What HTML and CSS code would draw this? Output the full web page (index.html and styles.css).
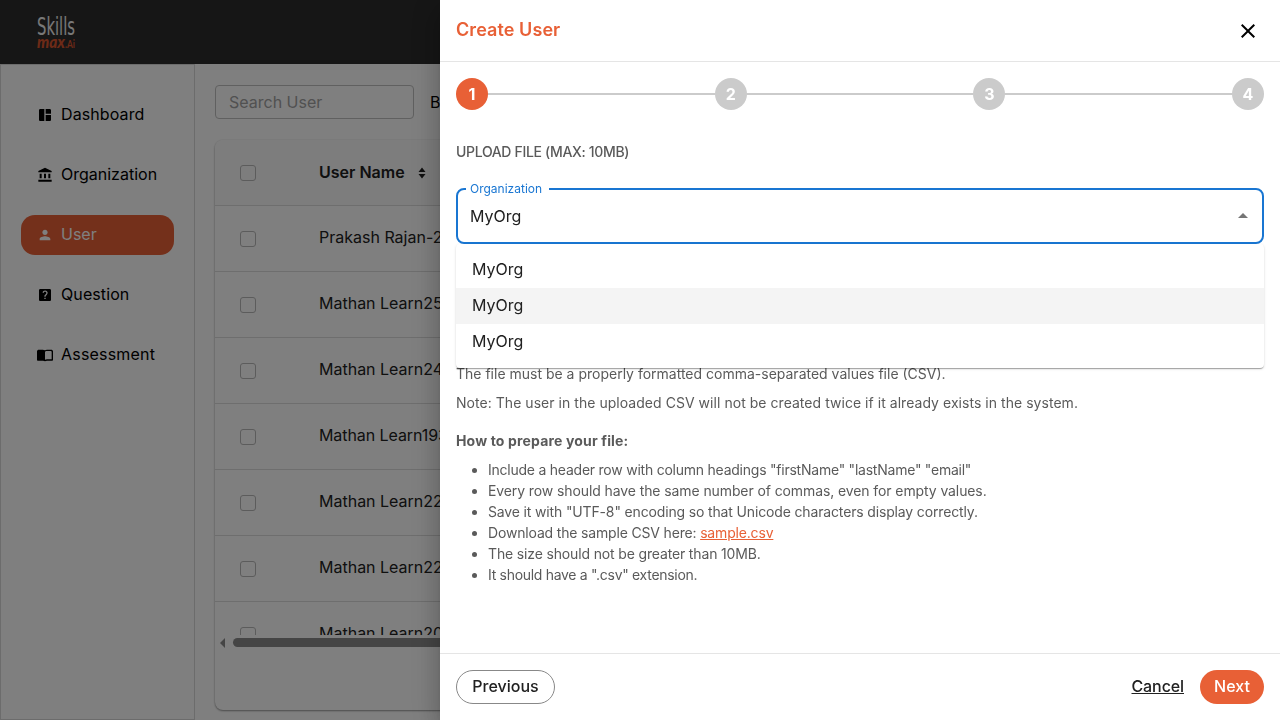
FILE: index.html
```html
<!DOCTYPE html>
<html lang="en">
<head>
<meta charset="utf-8">
<title>Create User</title>
<link rel="stylesheet" href="styles.css">
</head>
<body>
<div class="app">
  <header class="topbar">
    <svg class="logo" width="44" height="40" viewBox="0 0 44 40">
      <text class="logo-skills" x="1" y="22" textLength="38" lengthAdjust="spacingAndGlyphs">Skills</text>
      <text class="logo-max" x="1" y="35" textLength="28" lengthAdjust="spacingAndGlyphs">max</text>
      <text class="logo-ai" x="29" y="34.500" textLength="10" lengthAdjust="spacingAndGlyphs">.Ai</text>
    </svg>
  </header>
  <div class="body">
    <nav class="sidebar">
      <a class="nav-item"><svg viewBox="0 0 24 24"><path d="M11 21H5c-1.100 0-2-.9-2-2V5c0-1.100.9-2 2-2h6v18zm2 0h6c1.100 0 2-.9 2-2v-7h-8v9zm8-11V5c0-1.100-.9-2-2-2h-6v7h8z"/></svg><span class="t-dash">Dashboard</span></a>
      <a class="nav-item"><svg viewBox="0 0 24 24"><path d="M4 10h3v7H4zm6.500 0h3v7h-3zM2 19h20v3H2zm15-9h3v7h-3zM12 1 2 6v2h20V6z"/></svg><span class="t-org">Organization</span></a>
      <a class="nav-item active"><svg viewBox="0 0 24 24"><path d="M12 12c2.210 0 4-1.790 4-4s-1.790-4-4-4-4 1.790-4 4 1.790 4 4 4zm0 2c-2.670 0-8 1.340-8 4v2h16v-2c0-2.660-5.330-4-8-4z"/></svg><span class="t-user">User</span></a>
      <a class="nav-item"><svg viewBox="0 0 24 24"><path fill-rule="evenodd" d="M19 3H5c-1.100 0-2 .9-2 2v14c0 1.100.9 2 2 2h14c1.100 0 2-.9 2-2V5c0-1.100-.9-2-2-2zm-6 15h-2v-2h2zm1.800-6.400c-.9 1.100-1.800 1.400-1.800 3.100h-2c0-2.500 1-2.900 1.900-3.800.7-.7 1.100-1.100 1.100-1.900 0-1.200-.9-1.900-1.900-1.900S10.200 7.900 10 9l-1.800-.8C8.700 6.400 10.200 5.200 12.100 5.200c2.300 0 3.900 1.500 3.900 3.600 0 1.200-.5 2-1.200 2.800z"/></svg><span class="t-quest">Question</span></a>
      <a class="nav-item"><svg viewBox="0 0 24 24"><path fill-rule="evenodd" d="M21 4H15c-1.300 0-2.300.4-3 1-.9-.6-2-1-3.300-1H3C1.300 4 0 5 0 6.500V19c0 1 .7 1.500 1.500 1.500H9c1.200 0 2.200.4 3 1 .8-.6 1.800-1 3-1h7.500c.8 0 1.500-.5 1.500-1.500V6.500C24 5 22.700 4 21 4zm1 14.500h-7c-1.200 0-2.200.3-3 .8V8c0-1.200 1.200-2 3-2h5.500c.9 0 1.500.5 1.500 1.200z"/></svg><span class="t-assess">Assessment</span></a>
    </nav>
    <main class="main">
      <div class="toolbar"><div class="search">Search User</div><span>Bulk Upload</span></div>
      <section class="card">
        <div class="table">
          <div class="row head"><i class="check"></i><span class="t-head">User Name</span><svg class="sort" viewBox="0 0 8 12"><path d="M4 0.500 7.500 5h-7zM4 11.500.5 7h7z"/></svg></div>
          <div class="row"><i class="check"></i><span>Prakash Rajan-2</span></div>
          <div class="row"><i class="check"></i><span>Mathan Learn25</span></div>
          <div class="row"><i class="check"></i><span>Mathan Learn24</span></div>
          <div class="row"><i class="check"></i><span class="t-193">Mathan Learn193</span></div>
          <div class="row"><i class="check"></i><span>Mathan Learn22</span></div>
          <div class="row"><i class="check"></i><span>Mathan Learn22</span></div>
          <div class="row"><i class="check"></i><span>Mathan Learn20</span></div>
        </div>
        <div class="scrollbar"><i class="arrow"></i><i class="thumb"></i></div>
      </section>
    </main>
  </div>
</div>
<div class="backdrop"></div>
<aside class="drawer">
  <header class="drawer-head">
    <h1>Create User</h1>
    <svg class="close" viewBox="0 0 24 24"><path d="M19 6.410 17.590 5 12 10.590 6.410 5 5 6.410 10.590 12 5 17.590 6.410 19 12 13.410 17.590 19 19 17.590 13.410 12z"/></svg>
  </header>
  <div class="content">
    <div class="stepper"><b class="step on">1</b><i></i><b class="step">2</b><i></i><b class="step">3</b><i></i><b class="step">4</b></div>
    <h2>UPLOAD FILE (MAX: 10MB)</h2>
    <div class="field">
      <fieldset><legend>Organization</legend><div class="value"><span class="t-my">MyOrg</span><i class="caret"></i></div></fieldset>
      <ul class="menu"><li><span class="t-my">MyOrg</span></li><li class="hover"><span class="t-my">MyOrg</span></li><li><span class="t-my">MyOrg</span></li></ul>
    </div>
    <div class="help">
      <p class="p1">The file must be a properly formatted comma-separated values file (CSV).</p>
      <p class="p2">Note: The user in the uploaded CSV will not be created twice if it already exists in the system.</p>
      <h3>How to prepare your file:</h3>
      <ul>
        <li><span class="l1">Include a header row with column headings "firstName" "lastName" "email"</span></li>
        <li><span class="l2">Every row should have the same number of commas, even for empty values.</span></li>
        <li><span class="l3">Save it with "UTF-8" encoding so that Unicode characters display correctly.</span></li>
        <li><span class="l4">Download the sample CSV here: <a>sample.csv</a></span></li>
        <li><span class="l5">The size should not be greater than 10MB.</span></li>
        <li><span class="l6">It should have a ".csv" extension.</span></li>
      </ul>
    </div>
  </div>
  <footer class="actions">
    <span class="btn outline"><span class="t-prev">Previous</span></span>
    <span class="cancel">Cancel</span>
    <span class="btn primary"><span class="t-next">Next</span></span>
  </footer>
</aside>
</body>
</html>
```
FILE: styles.css
```css
* { box-sizing: border-box; }
body { margin: 0; width: 1280px; height: 720px; overflow: hidden; font: 16px/24px Inter, "Liberation Sans", sans-serif; color: #212121; }
h1, h2, h3, p, ul { margin: 0; padding: 0; }
.app { height: 720px; display: flex; flex-direction: column; background: #fff; }
.topbar { height: 64px; flex: none; background: #2c2c2c; padding: 13px 36px; }
.logo { display: block; overflow: visible; }
.logo-skills { font: 400 25px "DejaVu Sans", sans-serif; fill: #f0f0f0; }
.logo-max { font: italic 900 16px Lato, sans-serif; fill: #d9552e; }
.logo-ai { font: 700 11px Lato, sans-serif; fill: #d9552e; }
.body { display: flex; flex: 1; min-height: 0; }
.sidebar { width: 195px; flex: none; border: 1px solid #d8d8d8; padding: 30px 20px; display: flex; flex-direction: column; gap: 20px; color: #000; }
.nav-item { height: 40px; display: flex; align-items: center; gap: 8px; padding-left: 16px; border-radius: 14px; }
.nav-item svg { width: 16px; height: 16px; }
.nav-item span { padding-bottom: 2px; }
.nav-item.active { background: #e86036; color: #fff; fill: #fff; }
.t-dash, .t-quest { letter-spacing: .1px; }
.t-assess { letter-spacing: .2px; }
.main { width: 1085px; padding: 21px 20px 10px; display: flex; flex-direction: column; gap: 21px; }
.toolbar { display: flex; align-items: center; gap: 16px; height: 34px; color: #000; white-space: nowrap; }
.search { width: 199px; height: 34px; border: 1px solid #c0c0c0; border-radius: 4px; padding: 4px 13px; color: #a2a2a2; }
.card { flex: 1; min-height: 0; border-radius: 8px; box-shadow: 0 1px 2px rgba(0,0,0,.4), 0 0 2px rgba(0,0,0,.1); overflow: hidden; display: flex; flex-direction: column; }
.table { height: 495px; overflow: hidden; }
.row { height: 66px; display: flex; align-items: center; padding: 0 0 2px 25px; border-bottom: 1px solid #dcdcdc; }
.row span { padding-bottom: 2px; }
.row.head { background: #fbfbfb; font-weight: 600; }
.row.head span { padding-bottom: 0; }
.check { width: 16px; height: 16px; border: 1px solid #b8b8b8; border-radius: 3px; margin: 2px 63px 0 0; }
.sort { width: 8px; height: 12px; margin: 2px 0 0 13px; fill: #212121; }
.t-193 { letter-spacing: -.08px; }
.scrollbar { height: 15px; display: flex; align-items: center; gap: 8px; padding-left: 5px; }
.arrow { border: 5px solid transparent; border-left: 0; border-right-color: #8a8a8a; }
.thumb { height: 9px; flex: 1; background: #8b8b8b; border-radius: 5px; }
.backdrop { position: fixed; inset: 0; background: rgba(0,0,0,.5); }
.drawer { position: fixed; top: 0; right: 0; width: 840px; height: 720px; background: #fff; display: flex; flex-direction: column; box-shadow: 0 8px 10px -5px rgba(0,0,0,.2), 0 16px 24px 2px rgba(0,0,0,.14), 0 6px 30px 5px rgba(0,0,0,.12); }
.drawer-head { height: 62px; flex: none; display: flex; align-items: center; justify-content: space-between; padding: 0 20px 0 16px; border-bottom: 1px solid #e5e5e5; }
h1 { font-size: 18px; line-height: 27px; font-weight: 600; color: #e86036; letter-spacing: .08px; padding-bottom: 2px; }
.close { width: 24px; height: 24px; }
.content { flex: 1; padding: 16px 16px 0; min-height: 0; color: #5a5a5a; }
.stepper { display: flex; align-items: center; }
.stepper i { flex: 1; height: 2px; background: #cbcbcb; }
.step { width: 32px; height: 32px; border-radius: 50%; background: #cbcbcb; color: #fff; text-align: center; line-height: 33px; font-weight: 700; }
.step.on { background: #e86036; }
h2 { font-size: 14px; line-height: 21px; font-weight: 500; margin: 31px 0 26px; white-space: nowrap; letter-spacing: -.33px; }
.field { position: relative; height: 56px; color: #212121; display: flex; }
fieldset { margin: -5px 0 0; flex: 1; height: 61px; min-width: 0; padding: 0 14px 0 8px; border: 2px solid #1976d2; border-radius: 8px; }
legend { font-size: 12px; line-height: 12px; height: 12px; color: #1976d2; padding: 0 7px 0 4px; width: 83px; white-space: nowrap; }
.value { display: flex; justify-content: space-between; align-items: center; height: 42px; padding-left: 4px; }
.caret { border: 5px solid transparent; border-top: 0; border-bottom-color: #757575; margin-bottom: 2px; }
.menu { position: absolute; top: 56px; left: 0; right: 0; height: 124px; padding: 8px 0; list-style: none; background: #fff; border-radius: 4px; z-index: 1; box-shadow: 0 2px 1px -1px rgba(0,0,0,.2), 0 1px 1px rgba(0,0,0,.14), 0 1px 3px rgba(0,0,0,.12); }
.menu li { height: 36px; padding: 5px 16px 7px; }
.menu .hover { background: #f4f4f4; }
.help { padding-top: 119px; font-size: 14px; line-height: 21px; white-space: nowrap; }
.help p { margin-bottom: 8px; }
.p2 { letter-spacing: .04px; }
h3 { font-size: 14px; line-height: 21px; font-weight: 700; margin: 17px 0 8px; letter-spacing: .16px; }
.help ul { padding-left: 32px; }
.help a { color: #e86036; text-decoration: underline; }
.l1 { letter-spacing: -.235px; }
.l2 { letter-spacing: -.1px; }
.l3 { letter-spacing: -.15px; }
.l4 { letter-spacing: -.17px; }
.l5 { letter-spacing: -.15px; }
.l6 { letter-spacing: -.3px; }
.actions { height: 67px; flex: none; border-top: 1px solid #e5e5e5; display: flex; align-items: center; padding: 0 16px; gap: 16px; font-weight: 500; }
.btn { height: 34px; border-radius: 17px; display: flex; align-items: center; justify-content: center; padding-bottom: 2px; }
.outline { width: 99px; border: 1px solid #888; margin-right: auto; }
.primary { width: 64px; background: #e86036; color: #fff; }
.cancel { text-decoration: underline; letter-spacing: -.1px; padding-bottom: 2px; }
```
